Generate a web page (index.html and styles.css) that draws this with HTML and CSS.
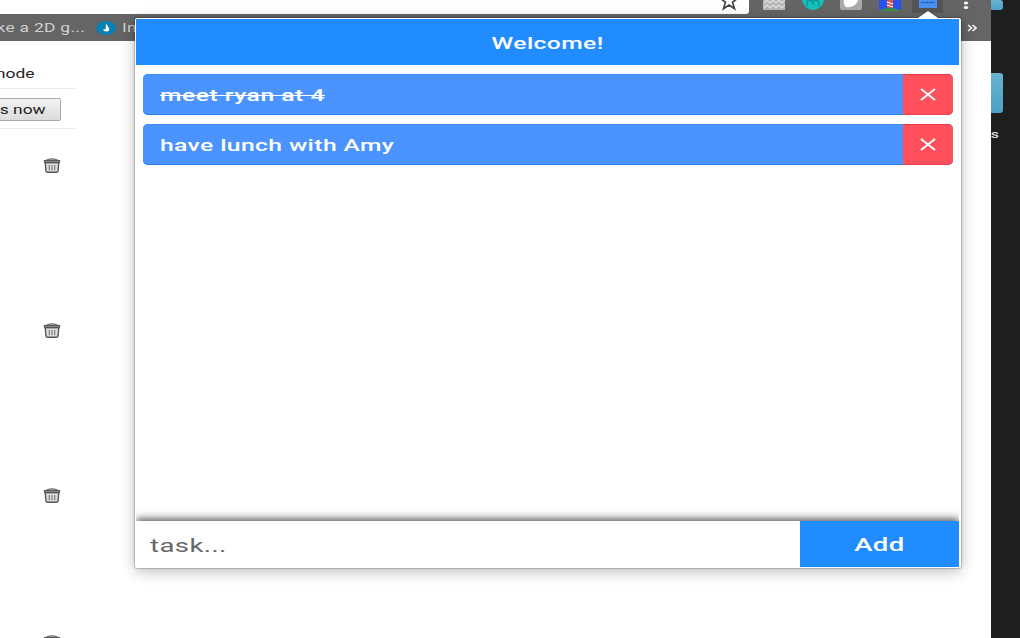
FILE: index.html
```
<!DOCTYPE html>
<html>
<head>
    <meta charset="utf-8">
    <title>Todo</title>
    <link rel="stylesheet" href="styles.css">
</head>
<body>
    <svg width="0" height="0" class="defs">
        <symbol id="trash" viewBox="0 0 18 15">
            <path d="M2.2 4.5h13.6l-.8 8.6q-.2 1.2-1.6 1.2H4.6q-1.4 0-1.6-1.2z" fill="#ddd" stroke="#555" stroke-width="1.4"/>
            <path d="M3 2.4Q5 .8 9 .8t6 1.6" fill="#ccc" stroke="#666" stroke-width="1.2"/>
            <path d="M1 2.5h16l-.6 2.2H1.6z" fill="#888" stroke="#444" stroke-width=".8"/>
            <path d="M6.3 7v5.3M9 7v5.3M11.7 7v5.3" stroke="#777" stroke-width="1.1"/>
        </symbol>
    </svg>

    <div class="browser">
        <div class="toolbar">
            <div class="address-bar">
                <svg class="star" width="20" height="20" viewBox="0 0 20 20"><path d="M10 1.5l2.3 6h6.2l-5 3.7 2 6.5L10 14l-5.5 3.7 2-6.5-5-3.7h6.2z" fill="#fff" stroke="#444" stroke-width="1.7"/></svg>
            </div>
            <div class="extensions">
                <svg width="22" height="10" viewBox="0 0 22 10"><path d="M0 0h22v10H0z" fill="#b4b4b4"/><path d="M1 3l3-3 3 3 3-3 3 3 3-3 3 3 3-3M1 8l3-3 3 3 3-3 3 3 3-3 3 3 3-3" fill="none" stroke="#ddd" stroke-width="1.4"/></svg>
                <svg width="22" height="10" viewBox="0 0 22 10"><path d="M0 0h22q-1 5-5 8-6 4-12 0-4-3-5-8z" fill="#16c1bc"/><path d="M5 6V3q0-3 3-2.500t3 2.500q0-3 3-2.500t3 2.500v3M11 2v3" fill="none" stroke="#0b918f" stroke-width="1.3"/></svg>
                <svg width="22" height="10" viewBox="0 0 22 10"><path d="M0 0h22v8q0 2-2 2H2q-2 0-2-2z" fill="#aaa"/><path d="M4 0h14q-1 4-5 6-4 2-7 1-3-2-2-7z" fill="#fff"/></svg>
                <svg width="22" height="11" viewBox="0 0 22 11"><path d="M0 0h22v10H0z" fill="#2853ee"/><path d="M1 10q10-4 20 0l-3 1H4z" fill="#35924e"/><path d="M8 0h6v8H8z" fill="#dd5140"/><path d="M8 2l6 2M8 5l6 2" stroke="#fff" stroke-width="1.3"/></svg>
                <div class="current-extension">
                    <svg width="18" height="8" viewBox="0 0 18 8"><path d="M0 0h18v8H0z" fill="#4b91f2"/><path d="M2 2.500h14" stroke="#235cae" stroke-width="1.500" stroke-dasharray="2 .6"/></svg>
                </div>
            </div>
            <svg class="more" width="6" height="10" viewBox="0 0 6 10"><ellipse cx="3" cy="3" rx="2.200" ry="1.500"/><ellipse cx="3" cy="7.500" rx="2.200" ry="1.500"/></svg>
        </div>
        <div class="bookmarks">
            <div class="bookmark first"><span class="wide">ke a 2D g...</span></div>
            <svg class="favicon" width="20" height="14" viewBox="0 0 20 14"><ellipse cx="10" cy="7" rx="10" ry="7" fill="#087fb4"/><path d="M10 2.500l3 4.500q1 3.500-2.500 3.500T7.500 8l2 .5z" fill="#fff"/></svg>
            <div class="bookmark"><span class="wide">In</span></div>
            <svg class="overflow" width="10" height="8" viewBox="0 0 10 8"><path d="M1 1l3.500 3L1 7M5.500 1L9 4 5.500 7" fill="none" stroke="#fff" stroke-width="1.500"/></svg>
        </div>
        <div class="page">
            <div class="mode"><span class="wide">mode</span></div>
            <div class="update"><button><span class="wide">s now</span></button></div>
            <div class="trash-list">
                <svg width="18" height="15"><use href="#trash"/></svg>
                <svg width="18" height="15"><use href="#trash"/></svg>
                <svg width="18" height="15"><use href="#trash"/></svg>
                <svg width="18" height="15"><use href="#trash"/></svg>
            </div>
        </div>
    </div>

    <div class="desktop">
        <div class="folder top"></div>
        <div class="folder"></div>
        <span class="wide">s</span>
    </div>

    <div class="popup">
        <div class="header"><span class="wide">Welcome!</span></div>
        <div class="tasks">
            <div class="task done">
                <div class="task-text"><span class="wide">meet ryan at 4</span></div>
                <button class="delete-btn"><svg width="16" height="13" viewBox="0 0 16 13"><path d="M1 1l14 11M15 1L1 12"/></svg></button>
            </div>
            <div class="task">
                <div class="task-text"><span class="wide">have lunch with Amy</span></div>
                <button class="delete-btn"><svg width="16" height="13" viewBox="0 0 16 13"><path d="M1 1l14 11M15 1L1 12"/></svg></button>
            </div>
        </div>
        <div class="add-task">
            <div class="task-input"><span class="wide">task...</span></div>
            <button class="add-btn"><span class="wide">Add</span></button>
        </div>
    </div>
</body>
</html>
```

FILE: styles.css
```
* {
    box-sizing: border-box;
}
body {
    margin: 0;
    width: 1020px;
    height: 638px;
    display: flex;
    position: relative;
    overflow: hidden;
    background-color: #1e1e1e;
    font-family: Roboto, "Liberation Sans", sans-serif;
}
button {
    border: none;
    padding: 0;
    font-family: inherit;
}
.defs {
    position: absolute;
}
/* expanded lettering */
.wide {
    display: inline-block;
    white-space: nowrap;
    letter-spacing: 0.27px;
    transform: scaleX(1.45);
}
.browser {
    width: 991px;
    background-color: #fff;
    overflow: hidden;
}
.toolbar {
    height: 15px;
    display: flex;
    align-items: flex-start;
    background-color: #656565;
}
.address-bar {
    width: 749px;
    height: 14px;
    display: flex;
    justify-content: flex-end;
    padding-right: 10px;
    background-color: #fff;
    border-bottom-right-radius: 3px;
    overflow: hidden;
}
.star {
    margin-top: -9px;
}
.extensions {
    display: flex;
    gap: 16.500px;
    margin-left: 14px;
}
.current-extension {
    width: 31px;
    height: 13px;
    margin-left: -5px;
    background-color: #555;
    text-align: center;
    line-height: 0;
}
.more {
    fill: #fff;
    margin-left: 20px;
}
.bookmarks {
    height: 26px;
    display: flex;
    align-items: center;
    background-color: #656565;
    color: #d0d0d0;
    font-size: 12px;
}
.first {
    width: 85px;
    display: flex;
    justify-content: flex-end;
}
.favicon {
    margin: 0 6px 0 11px;
}
.bookmark .wide {
    letter-spacing: 0.15px;
    transform-origin: left;
}
.first .wide {
    letter-spacing: 0.2px;
    transform-origin: right;
}
.overflow {
    margin-left: auto;
    margin-right: 14px;
}
.page {
    width: 77px;
    font-size: 12px;
    color: #222;
}
.mode {
    height: 48px;
    display: flex;
    justify-content: flex-end;
    padding: 26px 43px 0 0;
    border-bottom: 1px solid #ececec;
}
.mode .wide, .update .wide {
    letter-spacing: 0;
    transform-origin: right;
}
.update {
    height: 40px;
    display: flex;
    align-items: center;
    padding: 2px 16px 0 0;
    border-bottom: 1px solid #ececec;
}
.update button {
    flex: 1;
    height: 23px;
    padding-right: 14px;
    border: 1px solid #aaa;
    border-left: none;
    border-radius: 0 2px 2px 0;
    background: linear-gradient(#f2f2f2, #dcdcdc);
    font-size: 12px;
    color: #222;
    text-align: right;
}
.trash-list {
    display: flex;
    flex-direction: column;
    gap: 150px;
    padding: 28.5px 0 0 42.5px;
}
.trash-list svg:last-child {
    margin-top: -18px;
}
.desktop {
    width: 29px;
    color: #ddd;
    font-size: 11px;
    font-weight: 500;
    overflow: hidden;
}
.folder {
    width: 12px;
    height: 40px;
    margin: 63px 0 15px;
    background: linear-gradient(#68b4d3, #4c9fc4);
    border-radius: 0 3px 3px 0;
}
.folder.top {
    height: 10px;
    margin: 0;
}
.desktop .wide {
    margin-left: 1px;
}
.popup {
    position: absolute;
    left: 135px;
    top: 18px;
    width: 826px;
    height: 550px;
    display: flex;
    flex-direction: column;
    padding: 1px 2px 1px 1px;
    background-color: #fff;
    border-radius: 2px;
    box-shadow: 0 0 1px 1px rgba(0,0,0,0.2), 0 3px 15px rgba(0,0,0,0.28);
}
/* arrow pointing at the extension icon */
.popup::before {
    content: "";
    position: absolute;
    top: -7px;
    right: 23px;
    border: 10px solid transparent;
    border-top: none;
    border-bottom: 7px solid #fff;
}
.header {
    height: 46px;
    display: flex;
    justify-content: center;
    align-items: center;
    padding-top: 1px;
    background-color: #218cff;
    color: #fff;
    font-size: 17px;
    font-weight: 500;
}
.tasks {
    flex: 1;
    padding: 9px 6px 0 7px;
}
.task {
    height: 41px;
    display: flex;
    margin-bottom: 9px;
    border-radius: 5px;
    overflow: hidden;
    background-color: #4b93ff;
    box-shadow: inset 0 -1px #2781f5, inset 0 1px #3e8bfb;
}
.task-text {
    flex: 1;
    display: flex;
    align-items: center;
    padding-left: 17px;
    color: #fff;
    font-size: 17px;
    font-weight: 500;
}
.task-text .wide, .task-input .wide {
    transform-origin: left;
}
.done .wide {
    letter-spacing: 0.35px;
    text-decoration: line-through;
}
.delete-btn {
    width: 50px;
    display: flex;
    align-items: center;
    justify-content: center;
    background-color: #ff505b;
    box-shadow: inset 0 1px #e93748, inset 0 -1px #f0404e;
}
.delete-btn path {
    stroke: #fff;
    stroke-width: 2;
}
.add-task {
    height: 46px;
    display: flex;
    box-shadow: 0 -2px 8px rgba(0,0,0,0.7);
    clip-path: inset(-14px 0 0 0);
}
.task-input {
    flex: 1;
    display: flex;
    align-items: center;
    padding: 3px 0 0 14px;
    background-color: #fff;
    color: #666;
    font-size: 19px;
}
.add-btn {
    width: 159px;
    background-color: #218cff;
    color: #fff;
    font-size: 19px;
    font-weight: 500;
}
```
